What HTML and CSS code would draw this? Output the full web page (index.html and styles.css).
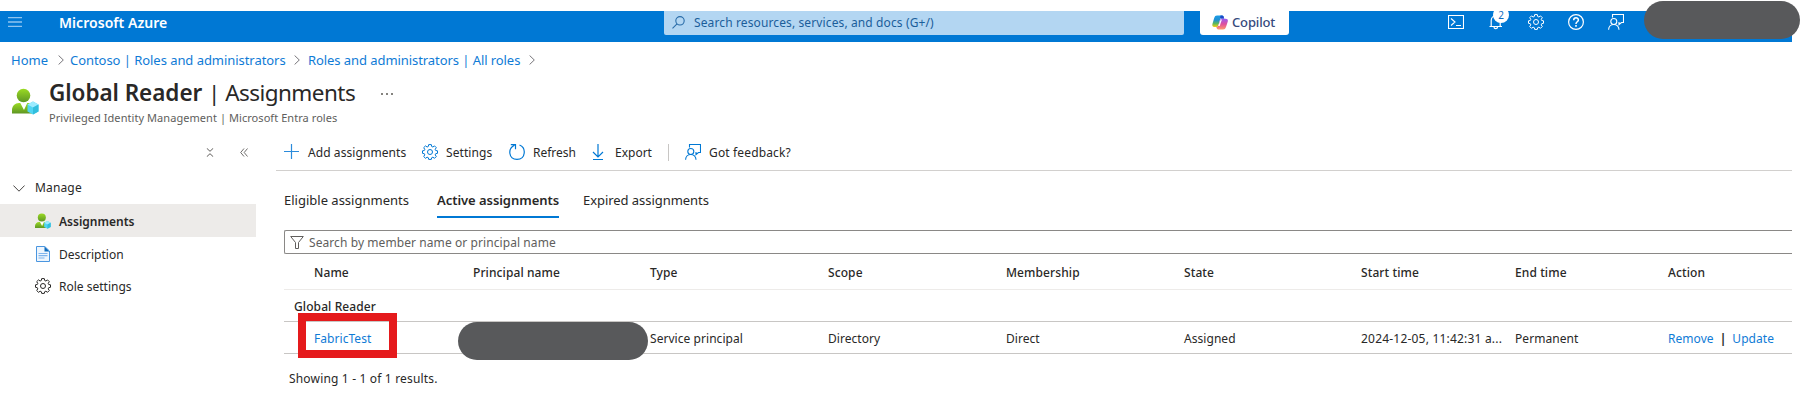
FILE: index.html
```
<!DOCTYPE html>
<html lang="en">
<head>
<meta charset="utf-8">
<title>Global Reader | Assignments - Microsoft Azure</title>
<link rel="stylesheet" href="styles.css">
</head>
<body>
<svg class="defs" width="0" height="0">
  <defs>
    <linearGradient id="green" x1="0" y1="0" x2="0" y2="1"><stop offset="0" stop-color="#9bdb23"/><stop offset="1" stop-color="#5e9624"/></linearGradient>
    <linearGradient id="coA" x1="0" y1="0" x2="0" y2="1"><stop offset="0" stop-color="#1b9de8"/><stop offset=".4" stop-color="#1f8fd0"/><stop offset=".7" stop-color="#5cb85c"/><stop offset="1" stop-color="#f5cf12"/></linearGradient>
    <linearGradient id="coB" x1="0" y1="0" x2="0" y2="1"><stop offset="0" stop-color="#9a5cf0"/><stop offset=".5" stop-color="#e0509c"/><stop offset="1" stop-color="#ff9a6b"/></linearGradient>
    <symbol id="user" viewBox="0 0 27 27">
      <path d="M0 25.5V22c0-4 3-7 7-7h10c3 0 5 3 5 6v4.500z" fill="url(#green)"/>
      <path d="M8 14.500h7.500L12 22z" fill="#fff"/>
      <circle cx="11.500" cy="7.500" r="6.800" fill="url(#green)"/>
      <path d="M21 13.500l5.500 3v7l-5.500 3-5.500-3v-7z" fill="#50d5f3"/>
      <path d="M21 13.500l5.500 3-5.500 3-5.500-3z" fill="#9cebff"/>
      <path d="M21 19.500l5.500-3v7l-5.500 3z" fill="#32bedd"/>
    </symbol>
    <symbol id="gear" viewBox="0 0 16 16">
      <path d="M6.700 .6h2.600l.4 1.900 1.200.5 1.600-1.100 1.800 1.800-1.100 1.600.5 1.200 1.800.3v2.500l-1.800.4-.5 1.200 1.100 1.600-1.800 1.800-1.600-1.100-1.200.5-.4 1.700H6.700l-.4-1.700-1.200-.5-1.600 1.100-1.800-1.800 1.100-1.600-.5-1.200-1.800-.4V6.800l1.800-.3.5-1.200-1.100-1.600 1.800-1.800L5.100 3l1.200-.5z" fill="none" stroke="currentColor" stroke-linejoin="round"/>
      <circle cx="8" cy="8" r="2.500" fill="none" stroke="currentColor"/>
    </symbol>
    <symbol id="feedback" viewBox="0 0 16 16">
      <g fill="none" stroke="currentColor" stroke-width="1.100"><path d="M4.500 3.500v-3h11v8h-2l-2.500 2v-2.500"/><circle cx="5.800" cy="7.500" r="3"/><path d="M.6 15.800c0-3.200 2.300-5.300 5.200-5.300s5.200 2.100 5.200 5.300"/></g>
    </symbol>
    <symbol id="chev" viewBox="0 0 6 10"><path d="M.6.5L5.300 5 .6 9.500" fill="none" stroke="#77757a"/></symbol>
  </defs>
</svg>

<header class="topbar">
  <svg class="menu" width="14" height="10" viewBox="0 0 14 10"><path d="M0 .500h14M0 5h14M0 9.500h14" stroke="#8fc4ef" stroke-width="1.300"/></svg>
  <span class="brand">Microsoft Azure</span>
  <div class="global-search">
    <svg width="13" height="13" viewBox="0 0 13 13"><g fill="none" stroke="#296ca8" stroke-width="1.100"><circle cx="8" cy="4.800" r="4.200"/><path d="M5 7.800L.5 12.300"/></g></svg>
    <span>Search resources, services, and docs (G+/)</span>
  </div>
  <div class="copilot">
    <svg width="16" height="15" viewBox="0 0 16 15">
      <path d="M5 .500h5.200c1 0 1.300.8 1.600 1.700L8.500 3 6.300 10.500C5.900 11.600 5.500 12 4.500 12H2.300C.4 12 0 10.500.5 8.800L2.200 3C2.800 1.300 3.500.5 5 .5z" fill="url(#coA)"/>
      <path d="M8.500.500h1.700c1 0 1.400.8 1.700 2l.4 1.300H9.300C8.500 3.800 8 3 8.300 2z" fill="#1b48c8"/>
      <path d="M11 14.500H6.300c-1 0-1.400-.6-1.700-1.700L4.300 12c1.200 0 1.700-.7 2-1.500l1.700-5.300C8.300 4.200 8.800 3.800 9.800 3.800h4c1.800 0 2.400 1.200 1.900 2.900L14 12c-.6 1.700-1.400 2.500-3 2.500z" fill="url(#coB)"/>
      <path d="M8.700 4.500h1.200L7.700 11H6.200z" fill="#fff"/>
    </svg>
    <span>Copilot</span>
  </div>
  <div class="top-icons">
    <svg width="16" height="14" viewBox="0 0 16 14"><path d="M.500.500h15v13H.500zM3 3.500l4 3.500-4 3.500M8 10.500h5" fill="none" stroke="#fff" stroke-width="1.100"/></svg>
    <span class="bell">
      <svg width="14" height="16" viewBox="0 0 14 16"><path d="M.500 12.500h12.500M2.200 12.500V6.500C2.200 3.800 4.200 2 6.700 2s4.500 1.800 4.500 4.500v6M5 13c0 2.200 3.500 2.200 3.500 0" fill="none" stroke="#fff" stroke-width="1.200"/></svg>
      <span class="count">2</span>
    </span>
    <svg width="16" height="16"><use href="#gear"/></svg>
    <svg width="16" height="16" viewBox="0 0 16 16"><g fill="none" stroke="#fff" stroke-width="1.200"><circle cx="8" cy="8" r="7.400"/><path d="M5.700 6.200c0-3.300 4.700-3.100 4.700-.3 0 1.800-2.400 1.900-2.400 4" stroke-width="1.500"/><path d="M8 11v1.700" stroke-width="1.600"/></g></svg>
    <svg width="16" height="16"><use href="#feedback"/></svg>
  </div>
  <span class="redacted account"></span>
</header>

<nav class="crumbs">
  <a class="c-home">Home</a><svg width="6" height="10"><use href="#chev"/></svg>
  <a class="c-org">Contoso | Roles and administrators</a><svg width="6" height="10"><use href="#chev"/></svg>
  <a class="c-roles">Roles and administrators | All roles</a><svg width="6" height="10"><use href="#chev"/></svg>
</nav>

<div class="heading">
  <svg class="role-icon" width="27" height="27"><use href="#user"/></svg>
  <div>
    <h1><b>Global Reader</b><span>| Assignments</span><svg width="12" height="2" viewBox="0 0 12 2"><path d="M0 0h2v2H0zM5 0h2v2H5zM10 0h2v2h-2z" fill="#85837f"/></svg></h1>
    <p>Privileged Identity Management | Microsoft Entra roles</p>
  </div>
</div>

<div class="body">
  <aside>
    <div class="side-tools">
      <svg width="8" height="9" viewBox="0 0 8 9"><path d="M.800.300L4 3.300 7.200.300M.800 8.700L4 5.700l3.200 3" fill="none" stroke="#605e5c"/></svg>
      <svg width="8" height="9" viewBox="0 0 8 9"><path d="M4 .500L.700 4.500 4 8.500M7.500.500L4.200 4.500l3.300 4" fill="none" stroke="#605e5c" stroke-width=".9"/></svg>
    </div>
    <div class="group"><svg width="12" height="7" viewBox="0 0 12 7"><path d="M.400.500L6 6.200 11.600.500" fill="none" stroke="#484644"/></svg><span>Manage</span></div>
    <div class="item on"><svg width="16" height="16"><use href="#user"/></svg><span>Assignments</span></div>
    <div class="item"><svg width="16" height="16" viewBox="0 0 16 16"><path d="M1.500.500h8.300l4.700 4.500v10.500h-13z" fill="#edf5fd" stroke="#4a96e0"/><path d="M9.500.500v5h5z" fill="#0f6cbd"/><path d="M3.500 7.500h9M3.500 9.700h9M3.500 12h6" stroke="#7fb4ec" stroke-width="1.200"/></svg><span>Description</span></div>
    <div class="item"><svg width="16" height="16"><use href="#gear"/></svg><span>Role settings</span></div>
  </aside>

  <main>
    <div class="toolbar">
      <div class="cmd t-add"><svg width="16" height="16" viewBox="0 0 16 16"><path d="M7.500 0v15M0 7.500h15" stroke="#2b8bdb" stroke-width="1.200"/></svg><span>Add assignments</span></div>
      <div class="cmd t-set"><svg width="16" height="16"><use href="#gear"/></svg><span>Settings</span></div>
      <div class="cmd t-ref"><svg width="16" height="16" viewBox="0 0 16 16"><path d="M10.500 1C17.500 3.700 16.800 15.400 8 15.400-.6 15.400-1.500 4.500 5.500 1.200M1.800.600h4.700v4.600" fill="none" stroke="currentColor" stroke-width="1.200"/></svg><span>Refresh</span></div>
      <div class="cmd t-exp"><svg width="12" height="16" viewBox="0 0 12 16"><path d="M6 0v12.500M1 8l5 5 5-5M1 15.500h10" fill="none" stroke="currentColor" stroke-width="1.200"/></svg><span>Export</span></div>
      <i class="sep"></i>
      <div class="cmd t-fb"><svg width="16" height="16"><use href="#feedback"/></svg><span>Got feedback?</span></div>
    </div>
    <div class="tabs"><span class="tab1">Eligible assignments</span><span class="tab2">Active assignments</span><span class="tab3">Expired assignments</span></div>
    <div class="filter"><svg width="14" height="13" viewBox="0 0 14 13"><path d="M.700.500h12.600L8.500 6.500v6h-3v-6z" fill="none" stroke="#605e5c"/></svg><span>Search by member name or principal name</span></div>
    <div class="grid">
      <div class="row head"><span>Name</span><span>Principal name</span><span>Type</span><span>Scope</span><span>Membership</span><span>State</span><span>Start time</span><span>End time</span><span>Action</span></div>
      <div class="row-group">Global Reader</div>
      <div class="row data"><span class="name"><a>FabricTest</a><i class="callout"></i></span><span class="principal"><i class="redacted"></i></span><span>Service principal</span><span>Directory</span><span>Direct</span><span>Assigned</span><span class="start">2024-12-05, 11:42:31 a...</span><span>Permanent</span><span class="actions"><a>Remove</a><b>|</b><a>Update</a></span></div>
    </div>
    <p class="summary">Showing 1 - 1 of 1 results.</p>
  </main>
</div>
</body>
</html>
```
FILE: styles.css
```
* { box-sizing: border-box; }
body {
  margin: 0;
  padding-top: 11px;
  height: 401px;
  overflow: hidden;
  background: #fff;
  color: #292827;
  font: 12px/16px "Noto Sans", "Open Sans", sans-serif;
  white-space: nowrap;
}
svg { display: block; flex: none; }
.defs { position: absolute; }
p, h1 { margin: 0; }
a { color: #0f7bd6; }
.redacted { background: #58595b; border-radius: 19px; }

/* Top bar */
.topbar {
  position: relative;
  display: flex;
  align-items: flex-start;
  width: 1792px;
  height: 31px;
  background: #0078d4;
  color: #fff;
}
.menu { margin: 6px 0 0 8px; }
.brand { width: 605px; margin-left: 37px; font-size: 14px; font-weight: 600; line-height: 24px; letter-spacing: .05px; }
.global-search {
  display: flex;
  align-items: center;
  gap: 9px;
  width: 520px;
  height: 24px;
  padding-left: 8px;
  border-radius: 0 0 2px 2px;
  background: #b3d6f2;
  color: #1b5e9b;
  letter-spacing: .12px;
}
.global-search svg { margin-top: -2px; }
.copilot {
  display: flex;
  align-items: center;
  gap: 4px;
  width: 89px;
  height: 24px;
  margin-left: 16px;
  padding-left: 12px;
  border-radius: 0 0 3px 3px;
  background: #fff;
  color: #35497c;
  font-size: 13px;
  font-weight: 500;
  line-height: 22px;
  letter-spacing: -.15px;
}
.copilot svg { margin-top: -2px; }
.copilot span { height: 24px; }
.top-icons { display: flex; align-items: center; gap: 24px; height: 22px; margin-left: 159px; }
.bell { position: relative; width: 16px; padding-left: 1px; }
.count {
  position: absolute;
  left: 5px;
  top: -7px;
  width: 16px;
  height: 16px;
  border-radius: 8px;
  background: #fff;
  color: #0f6cbd;
  font-size: 10px;
  text-align: center;
}
.account { position: absolute; left: 1644px; top: -10px; width: 156px; height: 38px; }

/* Breadcrumb */
.crumbs { display: flex; align-items: center; height: 36px; padding-left: 11px; font-size: 13px; }
.c-home { width: 47px; }
.c-org { width: 224px; margin-left: 6px; letter-spacing: -.05px; }
.c-roles { width: 221px; margin-left: 8px; letter-spacing: -.07px; }

/* Title */
.heading { display: flex; height: 56px; padding-left: 12px; }
.role-icon { margin: 10px 10px 0 0; }
h1 { display: flex; align-items: center; height: 32px; font-size: 22.500px; font-weight: 400; line-height: 30px; }
h1 b { width: 159px; height: 32px; font-weight: 600; letter-spacing: -.05px; }
h1 span { width: 173px; height: 32px; letter-spacing: -.55px; }
.heading p { font-size: 11px; color: #605e5c; letter-spacing: .06px; }

/* Side menu */
.body { display: flex; }
aside { width: 276px; padding-top: 14px; }
.side-tools { display: flex; gap: 26px; padding: 0 0 0 206px; height: 30px; align-items: flex-start; }
.group { display: flex; align-items: center; gap: 10px; height: 20px; padding-left: 13px; letter-spacing: .15px; }
.item { display: flex; align-items: center; gap: 8px; width: 256px; height: 32px; padding-left: 35px; }
.item span, .cmd span { padding-top: 1px; }
.item.on { height: 33px; margin: 6px 0 1px; background: #edebe9; font-weight: 600; }
.item.on span { padding-top: 2px; }

/* Command bar */
main { width: 1516px; }
.toolbar { display: flex; align-items: center; height: 37px; padding-left: 8px; border-bottom: 1px solid #d2d0ce; }
.cmd { display: flex; align-items: center; gap: 8px; }
.cmd svg { color: #0078d4; }
.t-add { width: 138px; letter-spacing: .08px; }
.t-set { width: 87px; letter-spacing: .08px; }
.t-ref { width: 83px; }
.t-exp { gap: 11px; width: 76px; }
.sep { width: 1px; height: 17px; background: #c8c6c4; }
.t-fb { margin-left: 16px; letter-spacing: .15px; }

/* Tabs */
.tabs { display: flex; height: 47px; padding: 12px 0 0 8px; }
.tabs span { height: 35px; line-height: 35px; }
.tab1 { width: 153px; font-size: 13px; }
.tabs .tab2 { width: 122px; border-bottom: 2px solid #0078d4; font-size: 13px; font-weight: 600; letter-spacing: -.05px; }
.tab3 { margin-left: 24px; font-size: 13px; letter-spacing: -.05px; }

/* Filter box */
.filter {
  display: flex;
  align-items: center;
  gap: 5px;
  height: 24px;
  margin: 12px 0 0 8px;
  padding-left: 5px;
  border: 1px solid #8a8886;
  border-right: 0;
  border-radius: 2px 0 0 2px;
  color: #605e5c;
  letter-spacing: .08px;
}
.filter span { padding-top: 2px; }

/* Assignment table */
.grid { margin-left: 8px; }
.row { display: grid; grid-template-columns: 159px 177px 178px 178px 178px 177px 154px 153px auto; align-items: center; padding-left: 30px; }
.head { height: 36px; padding-top: 2px; border-bottom: 1px solid #edebe9; font-weight: 500; letter-spacing: .1px; }
.row-group { height: 32px; padding-left: 10px; border-bottom: 1px solid #c8c6c4; line-height: 33px; font-weight: 500; letter-spacing: .1px; }
.data { height: 32px; padding-top: 2px; border-bottom: 1px solid #c8c6c4; }
.data > span { letter-spacing: .05px; }
.name, .principal { position: relative; height: 16px; }
.callout { position: absolute; left: -16px; top: -18px; width: 99px; height: 45px; border: 8px solid #e51a1c; }
.principal .redacted { position: absolute; left: -15px; top: -9px; width: 190px; height: 38px; }
.data .start { letter-spacing: .2px; }
.actions { display: flex; gap: 6px; }
.summary { padding: 17px 0 0 13px; letter-spacing: .17px; }
```
